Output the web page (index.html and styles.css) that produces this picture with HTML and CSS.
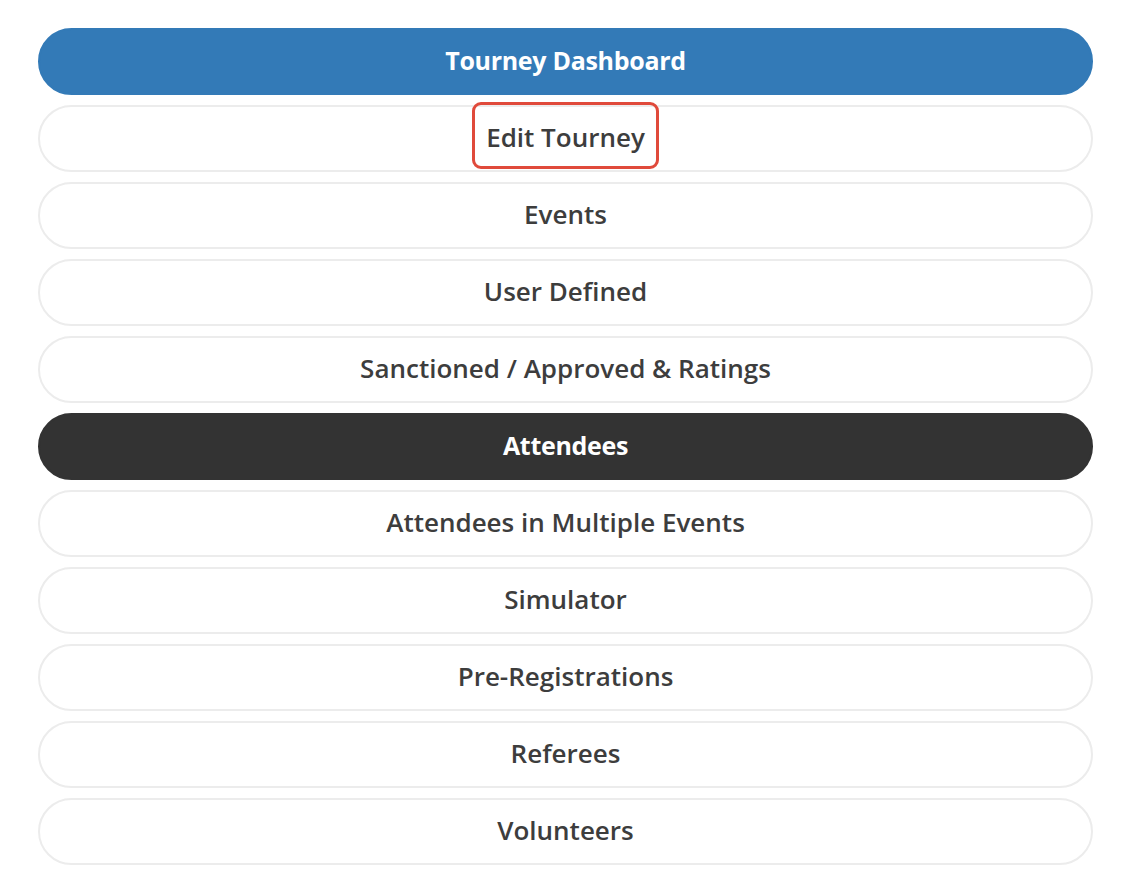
FILE: index.html
```html
<!DOCTYPE html>
<html>
<head>
<meta charset="utf-8">
<link rel="stylesheet" href="styles.css">
</head>
<body>
<nav class="menu">
  <a class="item item-primary">Tourney Dashboard</a>
  <a class="item"><span class="highlight">Edit Tourney</span></a>
  <a class="item">Events</a>
  <a class="item">User Defined</a>
  <a class="item">Sanctioned / Approved &amp; Ratings</a>
  <a class="item item-dark">Attendees</a>
  <a class="item">Attendees in Multiple Events</a>
  <a class="item">Simulator</a>
  <a class="item">Pre-Registrations</a>
  <a class="item">Referees</a>
  <a class="item">Volunteers</a>
</nav>
</body>
</html>
```
FILE: styles.css
```css
html, body {
  margin: 0;
  padding: 0;
  background: #ffffff;
}
body {
  font-family: "Open Sans", "Noto Sans", sans-serif;
}
.menu {
  display: flex;
  flex-direction: column;
  gap: 10px;
  padding: 28px 48px 0 38px;
}
.item {
  box-sizing: border-box;
  height: 67px;
  display: flex;
  align-items: center;
  justify-content: center;
  padding-bottom: 4px;
  border: 2px solid #ececec;
  border-radius: 34px;
  background: #fff;
  color: #3d3d3d;
  font-size: 26px;
  font-weight: 600;
  line-height: 34px;
}
.item-primary {
  background: #337ab7;
  border-color: #337ab7;
  color: #fff;
  font-size: 25px;
  font-weight: 700;
  letter-spacing: -0.3px;
}
.item-dark {
  background: #333333;
  border-color: #333333;
  color: #fff;
  font-size: 25px;
  font-weight: 700;
  letter-spacing: -0.3px;
}
.highlight {
  position: relative;
}
.highlight::after {
  content: "";
  position: absolute;
  left: -14px;
  right: -14px;
  top: -18px;
  bottom: -15px;
  border: 3px solid #e04a3b;
  border-radius: 9px;
}
```
